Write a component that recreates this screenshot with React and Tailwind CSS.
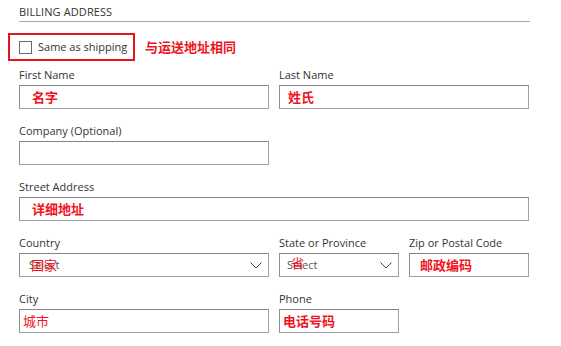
const cjk = "font-['Microsoft_YaHei','Noto_Sans_CJK_SC',sans-serif] font-bold text-[13px] text-[#f0141e]"

function Label({ children }) {
  return <div className="h-[14px] text-[11px] leading-[14px] text-[#333] mb-[3px]">{children}</div>
}

function Box({ children, className = '' }) {
  return (
    <div
      className={`relative h-[24px] border border-[#a0a0a0] border-t-[#858585] border-l-[#8f8f8f] bg-white flex items-center ${className}`}
    >
      {children}
    </div>
  )
}

function Chevron() {
  return (
    <svg className="absolute right-[6px] top-[8px]" width="12" height="7" viewBox="0 0 12 7" fill="none">
      <path d="M0.5 0.5 L6 6 L11.5 0.5" stroke="#444" strokeWidth="1" />
    </svg>
  )
}

function Field({ label, span = '', children, boxClass }) {
  return (
    <div className={`mb-[15px] ${span}`}>
      <Label>{label}</Label>
      <Box className={boxClass}>{children}</Box>
    </div>
  )
}

export default function App() {
  return (
    <div className="w-[561px] h-[346px] bg-white font-['Open_Sans',sans-serif] overflow-hidden">
      <div className="pl-[19px] w-[530px]">
        <div className="pt-[5px] pb-[2px] border-b border-[#a8a8a8] text-[11px] leading-[14px] text-[#333] tracking-[0.1px]">
          BILLING ADDRESS
        </div>
      </div>
      <div className="flex items-center mt-[11px] ml-[8px] h-[28px]">
        <div className="h-[28px] w-[127px] border-2 border-[#e3161c] flex items-center pl-[9px]">
          <span className="w-[13px] h-[13px] border border-[#6a6a6a] bg-white" />
          <span className="ml-[6px] text-[11px] text-[#333]">Same as shipping</span>
        </div>
        <span className={`${cjk} ml-[10px]`}>与运送地址相同</span>
      </div>
      <div className="pl-[19px] mt-[7px] grid grid-cols-[250px_120px_120px] gap-x-[10px]">
        <Field label="First Name">
          <span className={`${cjk} ml-[12px]`}>名字</span>
        </Field>
        <Field label="Last Name" span="col-span-2">
          <span className={`${cjk} ml-[8px]`}>姓氏</span>
        </Field>

        <Field label="Company (Optional)" span="col-span-3 w-[250px]" />

        <Field label="Street Address" span="col-span-3">
          <span className={`${cjk} ml-[12px]`}>详细地址</span>
        </Field>

        <Field label="Country">
          <span className="ml-[9px] text-[11px] text-[#555]">Select</span>
          <span className={`${cjk} absolute left-[11px] top-[1px] font-normal`}>国家</span>
          <Chevron />
        </Field>
        <Field label="State or Province">
          <span className="ml-[7px] text-[11px] text-[#555]">Select</span>
          <span className={`${cjk} absolute left-[11px] top-[-1px] font-normal`}>省</span>
          <Chevron />
        </Field>
        <Field label="Zip or Postal Code">
          <span className={`${cjk} ml-[10px]`}>邮政编码</span>
        </Field>

        <Field label="City">
          <span className={`${cjk} ml-[3px] font-normal`}>城市</span>
        </Field>
        <Field label="Phone">
          <span className={`${cjk} ml-[3px]`}>电话号码</span>
        </Field>
      </div>
    </div>
  )
}
